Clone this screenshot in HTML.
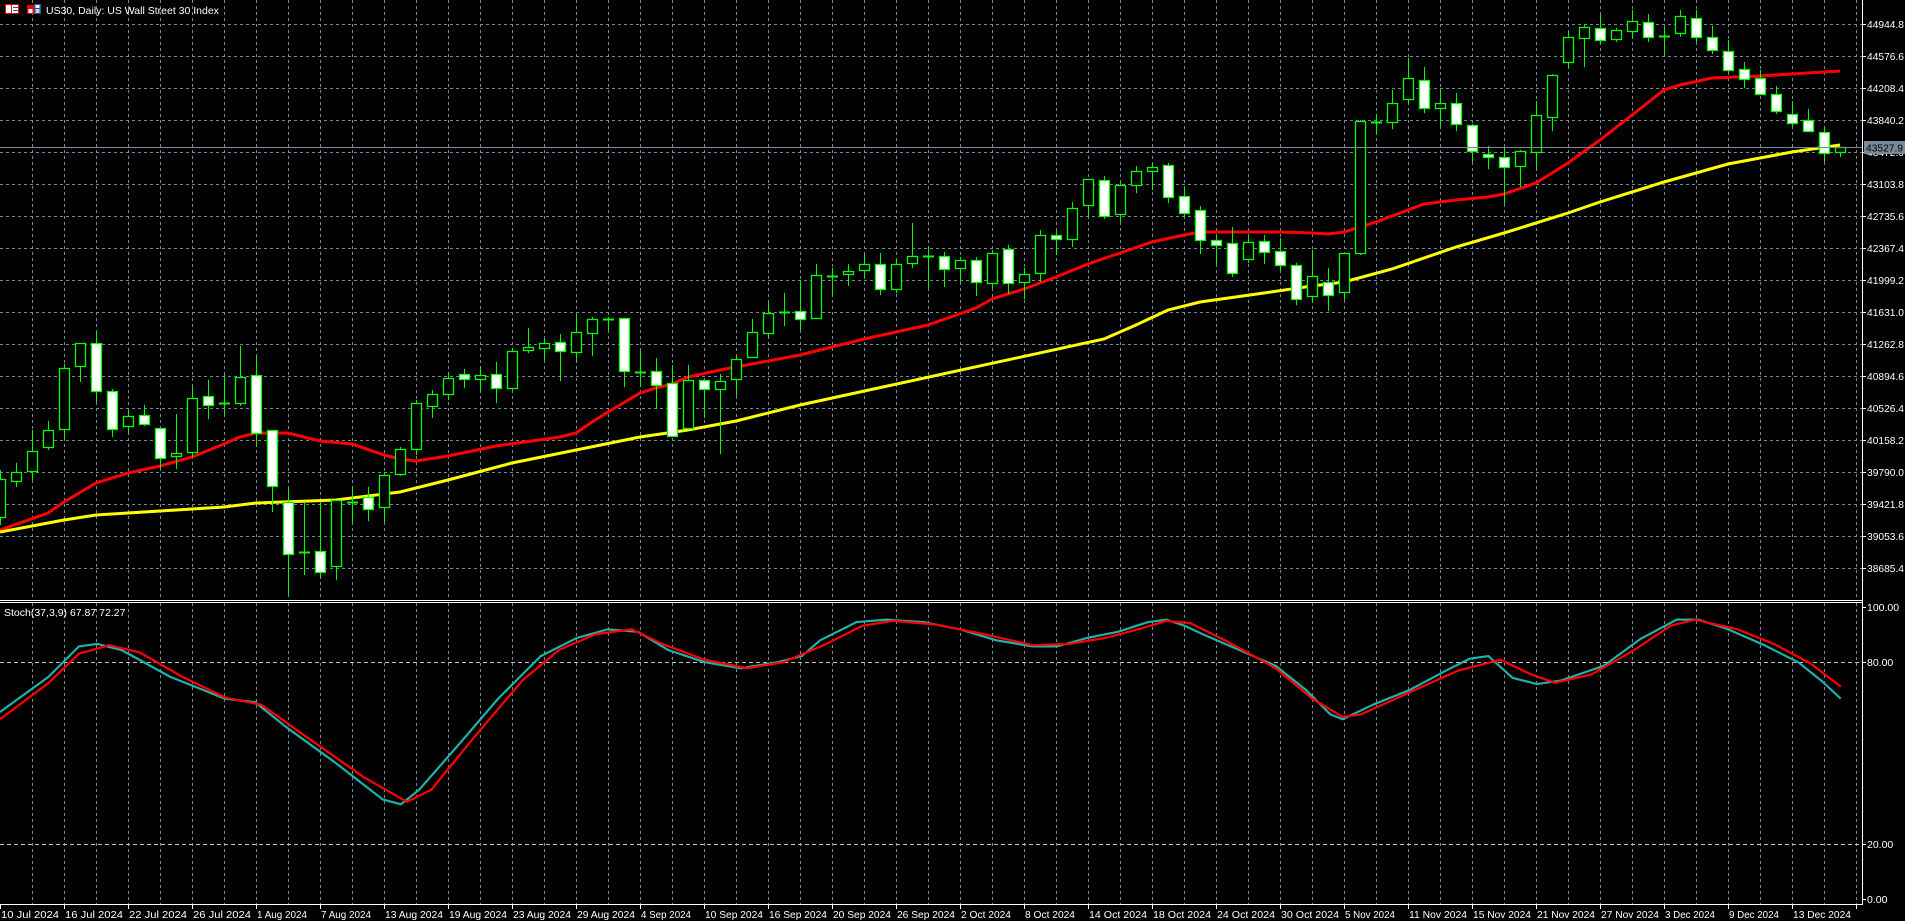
<!DOCTYPE html>
<html><head><meta charset="utf-8">
<style>
html,body{margin:0;padding:0;background:#000;width:1905px;height:921px;overflow:hidden}
svg{display:block}
text{font-family:"Liberation Sans",sans-serif;font-size:10.5px;fill:#fff}
.p text{font-size:10.5px}
</style></head><body>
<svg id="s" width="1905" height="921" xmlns="http://www.w3.org/2000/svg">
<rect width="1905" height="921" fill="#000"/>
<g id="grid"></g>
<g id="ma"></g>
<g id="candles"></g>
<line x1="0" y1="147.5" x2="1862" y2="147.5" stroke="#778899" stroke-width="1"/>
<line x1="0" y1="600.5" x2="1862" y2="600.5" stroke="#fff"/>
<line x1="0" y1="602.5" x2="1862" y2="602.5" stroke="#fff"/>
<line x1="0" y1="662.5" x2="1862" y2="662.5" stroke="#c0c0c0" stroke-dasharray="4,3"/>
<line x1="0" y1="844.5" x2="1862" y2="844.5" stroke="#c0c0c0" stroke-dasharray="4,3"/>
<g transform="scale(1.215)" fill="none" stroke-linejoin="round">
<polyline stroke="#20b2aa" stroke-width="1.8" points="0,586 40,557 65,532 80,530 100,535 140,557 185,575 210,578 235,598 275,627 315,658 330,662 345,650 380,610 410,575 445,540 475,525 500,518 525,520 550,535 580,545 610,550 640,545 660,540 675,527 705,512 730,510 760,512 790,518 820,527 850,532 870,532 895,525 920,520 945,512 960,510 975,515 990,522 1020,535 1050,548 1075,568 1095,588 1105,592 1130,580 1160,568 1190,552 1210,542 1225,540 1245,558 1265,563 1285,560 1320,548 1350,526 1380,510 1398,510 1420,517 1450,530 1480,545 1500,561 1515,575"/>
<polyline stroke="#ff0000" stroke-width="1.8" points="0,592 40,562 65,538 90,531 115,537 150,557 185,574 215,580 250,605 300,640 335,660 355,650 390,607 430,560 460,535 490,522 520,518 545,530 580,543 615,550 645,545 680,530 710,515 735,511 770,514 810,522 850,531 880,530 910,525 940,517 960,511 980,513 1010,528 1050,550 1080,575 1105,590 1120,588 1160,570 1200,552 1235,543 1260,555 1280,562 1310,555 1345,535 1375,515 1395,510 1430,518 1460,530 1490,546 1515,565"/>
</g>
<line x1="1862.5" y1="0" x2="1862.5" y2="904" stroke="#fff"/>
<line x1="0" y1="904.5" x2="1863" y2="904.5" stroke="#fff"/>
<g id="ticks"></g>
<g class="p">
<text x="1867" y="28" textLength="37" lengthAdjust="spacingAndGlyphs">44944.8</text>
<text x="1867" y="60" textLength="37" lengthAdjust="spacingAndGlyphs">44576.6</text>
<text x="1867" y="92" textLength="37" lengthAdjust="spacingAndGlyphs">44208.4</text>
<text x="1867" y="124" textLength="37" lengthAdjust="spacingAndGlyphs">43840.2</text>
<text x="1867" y="156" textLength="37" lengthAdjust="spacingAndGlyphs">43472.0</text>
<text x="1867" y="188" textLength="37" lengthAdjust="spacingAndGlyphs">43103.8</text>
<text x="1867" y="220" textLength="37" lengthAdjust="spacingAndGlyphs">42735.6</text>
<text x="1867" y="252" textLength="37" lengthAdjust="spacingAndGlyphs">42367.4</text>
<text x="1867" y="284" textLength="37" lengthAdjust="spacingAndGlyphs">41999.2</text>
<text x="1867" y="316" textLength="37" lengthAdjust="spacingAndGlyphs">41631.0</text>
<text x="1867" y="348" textLength="37" lengthAdjust="spacingAndGlyphs">41262.8</text>
<text x="1867" y="380" textLength="37" lengthAdjust="spacingAndGlyphs">40894.6</text>
<text x="1867" y="412" textLength="37" lengthAdjust="spacingAndGlyphs">40526.4</text>
<text x="1867" y="444" textLength="37" lengthAdjust="spacingAndGlyphs">40158.2</text>
<text x="1867" y="476" textLength="37" lengthAdjust="spacingAndGlyphs">39790.0</text>
<text x="1867" y="508" textLength="37" lengthAdjust="spacingAndGlyphs">39421.8</text>
<text x="1867" y="540" textLength="37" lengthAdjust="spacingAndGlyphs">39053.6</text>
<text x="1867" y="572" textLength="37" lengthAdjust="spacingAndGlyphs">38685.4</text>
</g>
<rect x="1864" y="141" width="41" height="13" fill="#778899"/>
<text x="1866" y="151.5" style="fill:#000" textLength="37" lengthAdjust="spacingAndGlyphs">43527.9</text>
<text x="1867" y="611">100.00</text>
<text x="1867" y="666">80.00</text>
<text x="1867" y="848">20.00</text>
<text x="1867" y="903">0.00</text>
<rect x="5.5" y="4.5" width="13" height="9" fill="#fff" stroke="#e00"/>
<line x1="11.5" y1="5" x2="11.5" y2="13" stroke="#e00"/>
<line x1="13" y1="7.5" x2="18" y2="7.5" stroke="#1e5aa8"/>
<line x1="13" y1="10.5" x2="18" y2="10.5" stroke="#1e5aa8"/>
<rect x="27" y="5" width="7" height="9" fill="#e00"/>
<rect x="28.5" y="9" width="4" height="4" fill="#fff"/>
<rect x="34" y="4" width="7" height="10" fill="#1e5aa8"/>
<rect x="35.5" y="5" width="4" height="3" fill="#fff"/>
<rect x="35.5" y="9" width="4" height="4" fill="#ccc"/>
<text x="46" y="14">US30, Daily:  US Wall Street 30 Index</text>
<text x="4" y="616">Stoch(37,3,9) 67.87 72.27</text>
<g>
<text x="1" y="918" textLength="58" lengthAdjust="spacingAndGlyphs">10 Jul 2024</text>
<text x="65" y="918" textLength="58" lengthAdjust="spacingAndGlyphs">16 Jul 2024</text>
<text x="129" y="918" textLength="58" lengthAdjust="spacingAndGlyphs">22 Jul 2024</text>
<text x="193" y="918" textLength="58" lengthAdjust="spacingAndGlyphs">26 Jul 2024</text>
<text x="257" y="918" textLength="50" lengthAdjust="spacingAndGlyphs">1 Aug 2024</text>
<text x="321" y="918" textLength="50" lengthAdjust="spacingAndGlyphs">7 Aug 2024</text>
<text x="385" y="918" textLength="58" lengthAdjust="spacingAndGlyphs">13 Aug 2024</text>
<text x="449" y="918" textLength="58" lengthAdjust="spacingAndGlyphs">19 Aug 2024</text>
<text x="513" y="918" textLength="58" lengthAdjust="spacingAndGlyphs">23 Aug 2024</text>
<text x="577" y="918" textLength="58" lengthAdjust="spacingAndGlyphs">29 Aug 2024</text>
<text x="641" y="918" textLength="50" lengthAdjust="spacingAndGlyphs">4 Sep 2024</text>
<text x="705" y="918" textLength="58" lengthAdjust="spacingAndGlyphs">10 Sep 2024</text>
<text x="769" y="918" textLength="58" lengthAdjust="spacingAndGlyphs">16 Sep 2024</text>
<text x="833" y="918" textLength="58" lengthAdjust="spacingAndGlyphs">20 Sep 2024</text>
<text x="897" y="918" textLength="58" lengthAdjust="spacingAndGlyphs">26 Sep 2024</text>
<text x="961" y="918" textLength="50" lengthAdjust="spacingAndGlyphs">2 Oct 2024</text>
<text x="1025" y="918" textLength="50" lengthAdjust="spacingAndGlyphs">8 Oct 2024</text>
<text x="1089" y="918" textLength="58" lengthAdjust="spacingAndGlyphs">14 Oct 2024</text>
<text x="1153" y="918" textLength="58" lengthAdjust="spacingAndGlyphs">18 Oct 2024</text>
<text x="1217" y="918" textLength="58" lengthAdjust="spacingAndGlyphs">24 Oct 2024</text>
<text x="1281" y="918" textLength="58" lengthAdjust="spacingAndGlyphs">30 Oct 2024</text>
<text x="1345" y="918" textLength="50" lengthAdjust="spacingAndGlyphs">5 Nov 2024</text>
<text x="1409" y="918" textLength="58" lengthAdjust="spacingAndGlyphs">11 Nov 2024</text>
<text x="1473" y="918" textLength="58" lengthAdjust="spacingAndGlyphs">15 Nov 2024</text>
<text x="1537" y="918" textLength="58" lengthAdjust="spacingAndGlyphs">21 Nov 2024</text>
<text x="1601" y="918" textLength="58" lengthAdjust="spacingAndGlyphs">27 Nov 2024</text>
<text x="1665" y="918" textLength="50" lengthAdjust="spacingAndGlyphs">3 Dec 2024</text>
<text x="1729" y="918" textLength="50" lengthAdjust="spacingAndGlyphs">9 Dec 2024</text>
<text x="1793" y="918" textLength="58" lengthAdjust="spacingAndGlyphs">13 Dec 2024</text>
</g>
</svg>
<script>
var NS="http://www.w3.org/2000/svg";
function el(p,t,a){var e=document.createElementNS(NS,t);for(var k in a)e.setAttribute(k,a[k]);p.appendChild(e);return e;}
var g=document.getElementById("grid");
for(var x=32;x<1862;x+=32){el(g,"line",{x1:x+.5,y1:0,x2:x+.5,y2:600,stroke:"#778899","stroke-dasharray":"3,3"});el(g,"line",{x1:x+.5,y1:603,x2:x+.5,y2:904,stroke:"#778899","stroke-dasharray":"3,3"});}
for(var y=24;y<=568;y+=32){el(g,"line",{x1:0,y1:y+.5,x2:1862,y2:y+.5,stroke:"#778899","stroke-dasharray":"3,3"});}
var tk=document.getElementById("ticks");
for(var y=24;y<=568;y+=32)el(tk,"line",{x1:1862,y1:y+.5,x2:1866,y2:y+.5,stroke:"#fff"});
[607,662,844,899].forEach(function(y){el(tk,"line",{x1:1862,y1:y+.5,x2:1866,y2:y+.5,stroke:"#fff"});});
for(var x=0;x<1862;x+=64)el(tk,"line",{x1:x+.5,y1:904,x2:x+.5,y2:909,stroke:"#fff"});
var ma=document.getElementById("ma");
el(ma,"polyline",{fill:"none",stroke:"#ff0000","stroke-width":3,points:"0,530 48,513 64,502 96,483 128,473 160,466 192,457 224,444 240,437 256,433 288,433 320,441 352,444 384,455 400,459 416,461 448,456 496,446 560,437 576,433 592,422 608,412 640,393 656,388 672,384 688,377 720,370 752,364 800,355 864,339 928,325 976,308 992,299 1024,289 1056,277 1088,264 1120,253 1152,242 1184,235 1200,232 1280,232 1312,233 1328,234 1344,232 1376,222 1424,204 1456,200 1488,197 1504,194 1536,183 1568,163 1600,140 1632,115 1664,90 1680,85 1712,78 1760,76 1792,74 1824,72 1840,71"});
el(ma,"polyline",{fill:"none",stroke:"#ffff00","stroke-width":3,points:"0,532 64,520 96,515 160,511 224,507 256,503 336,500 400,492 448,480 512,463 576,450 640,437 688,430 736,421 800,405 1104,339 1136,325 1168,310 1200,302 1264,293 1312,286 1344,282 1392,269 1456,247 1504,233 1568,213 1600,202 1664,182 1728,164 1792,152 1840,145"});
var C=[
["h",479,517,470,525],["h",472,481,463,487],["h",451,471,430,480],["h",430,447,421,450],["h",368,429,364,439],["h",343,366,343,382],["w",343,391,332,402],["w",391,429,389,437],["h",416,426,410,434],["w",415,424,405,426],
["w",428,458,428,469],["h",453,456,414,469],["h",398,452,387,457],["w",396,405,380,419],["d",403,403,375,415],["h",377,403,346,406],["w",375,433,356,446],["w",430,486,430,512],["w",502,554,489,595],["d",552,552,502,575],
["w",551,572,502,577],["h",500,566,500,580],["d",502,502,486,523],["w",497,509,487,521],["h",475,507,472,522],["h",449,474,447,476],["h",403,449,400,455],["h",394,406,390,418],["h",378,394,372,400],["w",374,379,369,388],
["h",375,379,367,391],["w",374,388,362,403],["h",351,388,348,390],["h",347,350,328,353],["h",343,348,339,360],["w",342,351,334,381],["h",332,352,314,361],["h",319,333,317,356],["d",319,319,317,330],["w",318,371,318,387],
["d",372,372,351,387],["w",371,385,358,409],["w",383,436,365,436],["h",380,428,365,428],["w",380,389,380,418],["h",381,389,374,454],["h",359,379,356,396],["h",332,357,319,358],["h",313,333,301,337],["d",312,312,293,326],
["w",311,319,280,330],["h",275,318,264,319],["d",276,276,268,294],["h",271,274,264,286],["h",264,270,255,278],["w",264,289,253,295],["h",264,289,259,293],["h",256,263,223,268],["d",256,256,247,288],["w",256,269,252,287],
["h",260,268,257,283],["w",260,282,257,296],["h",253,283,250,288],["w",249,283,245,294],["h",274,282,268,299],["h",235,273,230,282],["w",235,239,231,255],["h",208,239,202,247],["h",179,205,179,217],["w",180,216,176,219],
["h",185,214,182,222],["h",171,185,166,193],["h",167,171,163,190],["w",165,197,163,203],["w",196,213,188,217],["w",210,240,206,254],["w",240,245,234,264],["w",243,273,227,277],["h",242,259,236,263],["w",241,252,235,264],
["w",251,265,238,271],["w",265,299,263,305],["h",276,296,250,303],["w",282,295,268,311],["h",253,292,253,300],["h",121,253,120,255],["d",122,122,114,134],["h",103,122,90,129],["h",78,99,58,103],["w",80,108,67,113],
["h",103,108,89,126],["w",103,124,93,131],["w",125,151,124,162],["w",154,157,146,169],["w",157,167,148,204],["h",151,166,150,187],["h",115,152,101,169],["h",75,117,74,131],["h",37,62,32,68],["h",27,38,24,67],
["w",28,40,15,44],["h",30,39,28,42],["h",21,31,10,38],["w",22,37,14,42],["d",36,36,27,54],["h",16,33,10,37],["w",18,37,10,42],["w",37,50,26,54],["w",51,70,40,73],["w",69,79,62,88],
["w",78,94,70,94],["w",94,111,86,114],["w",114,123,101,127],["w",120,131,109,132],["w",132,153,127,162],["h",147,152,147,157]
];
var cg=document.getElementById("candles");
C.forEach(function(c,i){var x=16*i;
el(cg,"line",{x1:x+.5,y1:c[3],x2:x+.5,y2:c[4],stroke:"#00ff00"});
if(c[0]=="d"){el(cg,"line",{x1:x-5,y1:c[1]+.5,x2:x+6,y2:c[1]+.5,stroke:"#00ff00","stroke-width":2});}
else{var h=Math.max(c[2]-c[1],2);el(cg,"rect",{x:x-4.5,y:c[1]+.5,width:10,height:h,fill:c[0]=="w"?"#fff":"#000",stroke:"#00ff00","stroke-width":1.3});}
});
</script>
</body></html>
